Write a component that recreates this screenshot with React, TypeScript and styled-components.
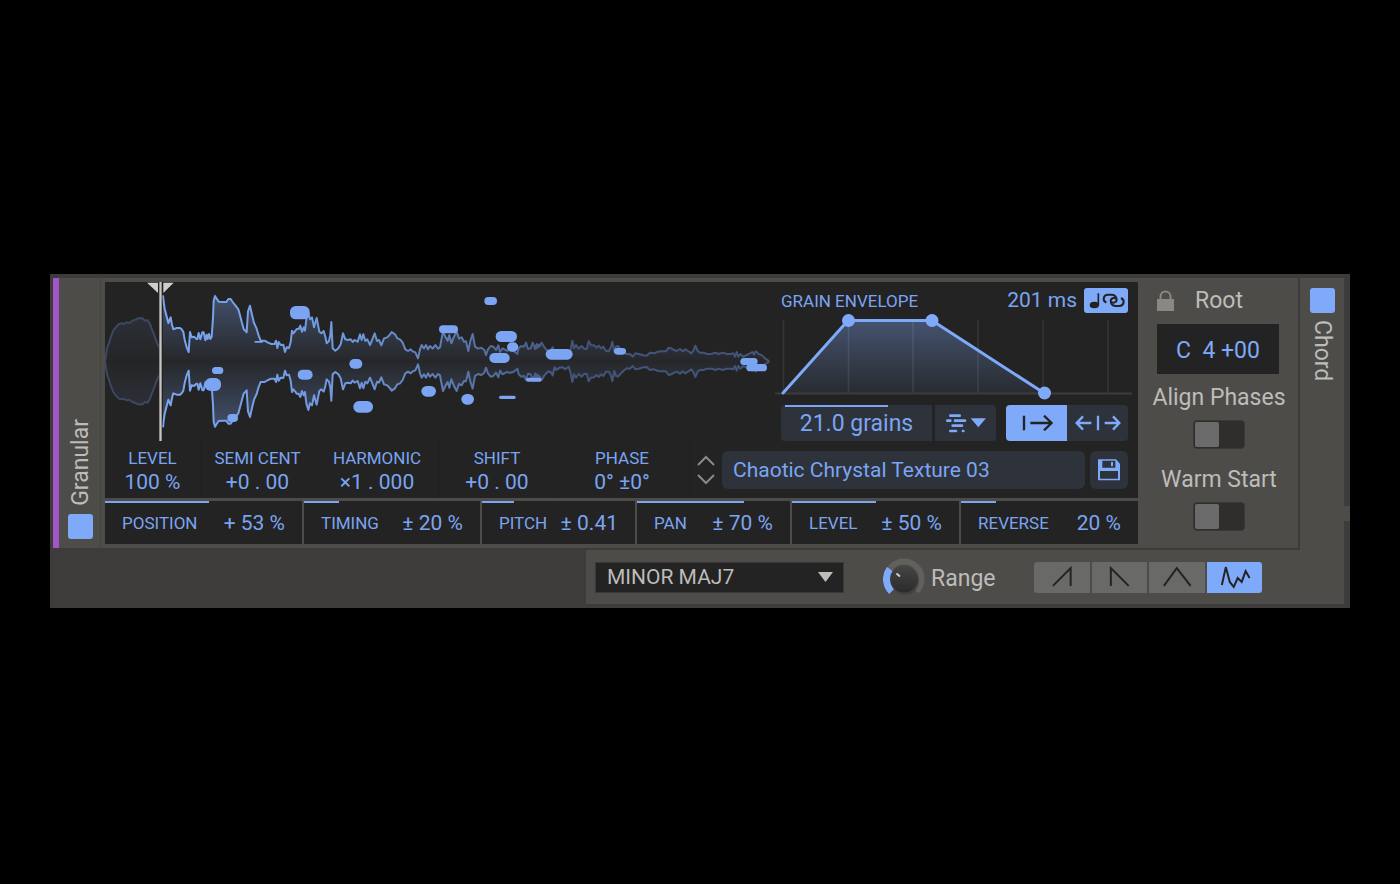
import React from 'react';
import styled, { createGlobalStyle, css } from 'styled-components';

const blue = '#7fa9f9';
const blueText = '#7ba5f2';
const ink = '#232323';
const slate = '#2d323b';
const face = '#4e4c49';
const shade = '#3d3c3a';
const pale = '#bdbcb9';

const GlobalStyle = createGlobalStyle`
  * { box-sizing: border-box; }
  body { margin: 0; background: #000; font-family: Roboto, "Liberation Sans", sans-serif; font-weight: 450; }
  button, input, select { font: inherit; color: inherit; margin: 0; padding: 0; border: 0; border-radius: 0; background: none; outline: none; }
  svg { display: block; flex: none; }
`;

const Page = styled.main`
  min-height: 100vh;
  display: flex;
  align-items: center;
  padding: 0 50px 2px;
`;

const Device = styled.section`
  flex: 1;
  display: flex;
  position: relative;
  background: ${shade};
  border: solid ${shade};
  border-width: 4px 6px 4px 3px;
`;

const Modules = styled.div`
  flex: 1;
  min-width: 0;
`;

const Oscillator = styled.div`
  display: flex;
  background: ${face};
  border: solid ${shade};
  border-width: 0 2px 2px 0;
`;

const Accent = styled.div`
  width: 6px;
  background: #a155c8;
`;

const Rail = styled.div`
  width: 42px;
  display: flex;
  flex-direction: column;
  align-items: center;
  justify-content: flex-end;
  gap: 8px;
  padding: 0 0 9px 2px;
  border-right: 1px solid #464441;
  color: ${pale};
  font-size: 23px;
  line-height: 26px;
`;

const RailName = styled.span<{ $up?: boolean }>`
  writing-mode: vertical-rl;
  ${p => p.$up && css`transform: rotate(180deg);`}
`;

const Power = styled.button`
  width: 25px;
  height: 25px;
  border-radius: 3px;
  background: ${blue};
`;

const ChordRail = styled.div`
  width: 44px;
  display: flex;
  flex-direction: column;
  align-items: center;
  gap: 7px;
  padding-top: 10px;
  background: ${face};
  color: ${pale};
  font-size: 23px;
  line-height: 26px;
`;

const EdgeNotch = styled.div`
  position: absolute;
  right: -6px;
  top: 228px;
  width: 6px;
  height: 15px;
  background: ${face};
`;

const Display = styled.div`
  flex: 1;
  min-width: 0;
  margin: 4px 0 4px 4px;
  color: ${blueText};
`;

const Screen = styled.div`
  background: ${ink};
  height: 216px;
`;

const ScreenTop = styled.div`
  display: flex;
  height: 159px;
`;

const Wave = styled.div`
  flex: 1;
  min-width: 0;
  svg { width: 100%; height: auto; }
`;

const Envelope = styled.div`
  width: 363px;
  display: flex;
  flex-direction: column;
  padding-top: 6px;
`;

const EnvelopeHead = styled.div`
  display: flex;
  align-items: center;
  height: 25px;
  padding: 0 10px 0 6px;
`;

const Caption = styled.span`
  font-size: 17px;
  line-height: 20px;
  white-space: nowrap;
`;

const Duration = styled.span`
  margin: 0 7px 2px auto;
  font-size: 21px;
  line-height: 24px;
`;

const SyncButton = styled.button`
  width: 44px;
  height: 25px;
  border-radius: 3px;
  background: ${blue};
`;

const EnvelopeControls = styled.div`
  display: flex;
  height: 36px;
  padding: 0 10px 0 6px;
  margin-top: 4px;
`;

const GrainsField = styled.label`
  position: relative;
  width: 151px;
  margin-right: 3px;
  border-radius: 4px 0 0 4px;
  background: ${slate};
  overflow: hidden;
  input { width: 100%; height: 36px; text-align: center; font-size: 23px; }
`;

const GrainsLevel = styled.i`
  position: absolute;
  left: 4px;
  top: 0;
  height: 2px;
  width: 103px;
  background: ${blueText};
`;

const IconButton = styled.button<{ $on?: boolean; $radius: string }>`
  width: 61px;
  display: flex;
  align-items: center;
  justify-content: center;
  border-radius: ${p => p.$radius};
  background: ${p => (p.$on ? blue : slate)};
  color: ${p => (p.$on ? ink : blue)};
`;

const SaveButton = styled(IconButton)`
  width: 38px;
  height: 38px;
`;

const Directions = styled.div`
  display: flex;
  margin-left: auto;
`;

const ScreenBottom = styled.div`
  display: flex;
  height: 57px;
`;

const Param = styled.label<{ $width: number }>`
  width: ${p => p.$width}px;
  padding-top: 7px;
  text-align: center;
  border-right: 1px solid #202020;
  input { display: block; width: 100%; height: 28px; text-align: center; font-size: 21px; line-height: 28px; }
  span { display: block; }
`;

const Preset = styled.div`
  flex: 1;
  display: flex;
  align-items: center;
  gap: 5px;
  height: 38px;
  margin: 10px 10px 0 7px;
`;

const Stepper = styled.button`
  width: 20px;
  height: 32px;
`;

const PresetName = styled.button`
  flex: 1;
  height: 38px;
  padding: 0 11px;
  border-radius: 6px;
  background: ${slate};
  color: ${blueText};
  text-align: left;
  font-size: 21px;
  line-height: 26px;
`;

const Modulators = styled.div`
  display: grid;
  grid-template-columns: 197fr 176fr 153fr 153fr 167fr 177fr;
  gap: 2px;
  margin-top: 3px;
`;

const Modulator = styled.label`
  min-width: 0;
  position: relative;
  display: flex;
  align-items: center;
  justify-content: space-between;
  height: 43px;
  padding: 0 17px;
  background: ${ink};
  input { width: 60px; flex: 1; text-align: right; font-size: 21px; line-height: 26px; }
`;

const Amount = styled.i`
  position: absolute;
  left: 0;
  top: 0;
  height: 2px;
  background: ${blueText};
`;

const Side = styled.aside`
  width: 160px;
  display: flex;
  flex-direction: column;
  align-items: center;
  color: ${pale};
  font-size: 23px;
  line-height: 28px;
`;

const RootHead = styled.div`
  display: flex;
  align-items: center;
  gap: 21px;
  align-self: stretch;
  margin: 9px 0 9px 19px;
`;

const RootNote = styled.input`
  width: 122px;
  height: 50px;
  padding-top: 3px;
  background: ${ink};
  color: ${blue};
  text-align: center;
  white-space: pre;
  margin-bottom: 10px;
`;

const SwitchField = styled.label`
  display: flex;
  flex-direction: column;
  align-items: center;
  gap: 8px;
  margin: 0 0 17px 2px;
  white-space: nowrap;
`;

const Switch = styled.input`
  appearance: none;
  width: 52px;
  height: 29px;
  padding: 2px;
  border-radius: 4px;
  background: #2f2e2c;
  border: 1px solid #393836;
  &::before {
    content: '';
    display: block;
    width: 24px;
    height: 25px;
    margin: -1px;
    border-radius: 2px;
    background: #6b6b6b;
  }
  &:checked::before { margin-left: 22px; background: ${blue}; }
`;

const ChordBar = styled.div`
  display: flex;
  align-items: center;
  height: 54px;
  width: 714px;
  margin-left: auto;
  padding-left: 9px;
  background: ${face};
  color: ${pale};
`;

const SelectBox = styled.div`
  display: flex;
  align-items: center;
  width: 249px;
  height: 31px;
  background: ${ink};
  border: 1px solid #3a3937;
  select { flex: 1; height: 29px; padding: 0 11px; appearance: none; font-size: 21px; }
  svg { margin: 0 10px 0 -25px; pointer-events: none; }
`;

const Knob = styled.label`
  position: relative;
  display: flex;
  align-items: center;
  gap: 6px;
  margin: 4px 0 0 39px;
  font-size: 23px;
  line-height: 28px;
  input { position: absolute; left: 0; top: 0; width: 42px; height: 42px; opacity: 0; }
`;

const Shapes = styled.div`
  display: flex;
  gap: 2px;
  width: 228px;
  margin-left: auto;
  margin-right: 38px;
  border-radius: 3px;
  overflow: hidden;
`;

const ShapeButton = styled.button<{ $on?: boolean }>`
  flex: 1;
  min-width: 0;
  height: 31px;
  background: ${p => (p.$on ? blue : '#696968')};
  color: ${ink};
  svg { width: 100%; }
`;

/* Sample contour: x position and distance from the centre line. */
const intro: number[][] = [
  [0, 0], [3, 18], [7, 42], [12, 55], [17, 72], [25, 92], [32, 102], [42, 112], [53, 114], [58, 112], [64, 117],
  [73, 115], [82, 122], [91, 125], [102, 130], [108, 128], [112, 130], [119, 122], [128, 124], [135, 112],
  [141, 95], [147, 80], [154, 60], [162, 42],
];

const head = [
  357, 82, 359, 102, 362, 122, 367, 142, 373, 165, 380, 148, 384, 170, 388, 184, 398, 180, 408, 180, 413, 184,
  418, 192, 422, 215, 428, 238, 434, 252, 438, 192, 443, 208, 450, 206, 456, 212, 460, 213, 464, 195, 469, 214,
  475, 193, 479, 193, 484, 217, 488, 200, 491, 213, 495, 198, 499, 213, 503, 207, 507, 150, 509, 98, 513, 84,
  518, 92, 524, 101, 535, 102, 547, 102, 553, 93, 560, 93, 566, 102, 574, 112, 583, 124, 588, 142, 594, 165,
  599, 183, 608, 193, 612, 130, 618, 113, 624, 140, 630, 165, 638, 182, 643, 200, 650, 218, 662, 218, 672, 224,
  682, 228, 692, 228, 696, 218, 700, 240, 704, 222, 710, 231, 718, 230, 723, 252, 728, 238, 735, 240, 740, 222,
];
const body = [
  36, 152, 40, 160, 46, 153, 50, 147, 56, 147, 61, 137, 66, 155, 71, 142, 75, 152, 79, 118, 85, 98, 90, 118,
  96, 112, 102, 142, 110, 114, 118, 155, 124, 160, 131, 153, 136, 170, 140, 190, 147, 183, 151, 165, 154, 126,
  158, 205, 166, 212, 175, 205, 182, 193, 189, 160, 196, 178, 204, 180, 212, 178, 218, 186, 224, 180, 233, 185,
  240, 163, 245, 180, 250, 163, 256, 183, 262, 178, 270, 195, 277, 178, 284, 160, 291, 183, 297, 180, 304, 196,
  312, 175, 322, 172, 330, 163, 335, 156, 345, 163, 352, 175, 360, 178, 368, 188, 376, 208, 384, 213, 392, 208,
  398, 214, 406, 217, 414, 235, 420, 208, 425, 195, 432, 205, 438, 195, 444, 208, 450, 198, 458, 206, 466, 195,
  474, 206, 480, 202, 484, 180, 489, 155, 496, 170, 503, 182, 508, 165, 514, 190, 522, 170, 530, 155, 537, 176,
  545, 172, 552, 185, 558, 184, 565, 213, 571, 183, 578, 162, 585, 200, 594, 206, 604, 203, 613, 210, 618, 225,
  624, 208, 632, 198, 640, 200, 648, 210, 655, 196, 660, 216, 668, 205, 680, 212, 690, 210, 700, 212, 712, 222,
  716, 205, 724, 198, 732, 200, 738, 188, 744, 207, 752, 205, 758, 188, 764, 202, 771, 192, 780, 198,
];
const tail = [
  8, 188, 15, 207, 22, 195, 30, 195, 35, 188, 42, 200, 48, 208, 56, 214, 62, 212, 68, 202, 74, 226, 80, 218,
  88, 225, 98, 226, 106, 220, 116, 228, 122, 208, 127, 182, 132, 205, 138, 195, 146, 206, 155, 198, 162, 206,
  170, 207, 176, 184, 183, 195, 192, 196, 200, 203, 206, 197, 214, 205, 220, 200, 228, 213, 237, 213, 243, 200,
  247, 185, 253, 215, 258, 200, 264, 198, 270, 205, 280, 215, 290, 223, 300, 222, 308, 230, 316, 220, 326, 222,
  340, 226, 350, 227, 360, 218, 372, 220, 384, 215, 396, 214, 408, 214, 416, 203, 424, 205, 432, 210, 440, 213,
  450, 207, 458, 214, 466, 208, 474, 213, 484, 220, 490, 212, 496, 197, 503, 213, 510, 218, 520, 218, 532, 222,
  545, 222, 556, 218, 566, 222, 578, 218, 590, 222, 602, 222, 610, 220, 615, 230, 620, 216, 625, 230, 631, 222,
  640, 230, 650, 225, 660, 220, 668, 216, 672, 224, 677, 214, 686, 222, 696, 226, 706, 236, 718, 244,
];

const pairs = (list: number[], dx: number, axis: number): number[][] => {
  const out: number[][] = [];
  for (let i = 0; i < list.length; i += 2) out.push([list[i] + dx, axis - list[i + 1]]);
  return out;
};
const sample = [...pairs(head, -183, 280), ...pairs(body, 525, 244), ...pairs(tail, 1275, 244)]
  .filter((p, i, all) => i === 0 || p[0] > all[i - 1][0]);

const AXIS = 238;
const line = (pts: number[][], sign: number) => pts.map(([x, a]) => `${x},${AXIS - sign * a}`);
const outline = (pts: number[][], sign: number) => 'M' + line(pts, sign).join('L');
const area = (pts: number[][]) => 'M' + [...line(pts, 1), ...line(pts, -1).reverse()].join('L') + 'Z';

/* Active grains: left, top, right, bottom. */
const grains: number[][] = [
  [321, 255, 355, 276], [300, 288, 348, 327], [367, 396, 399, 420], [448, 177, 474, 182],
  [555, 72, 614, 112], [578, 263, 623, 293], [733, 231, 772, 260], [745, 357, 804, 392],
  [1002, 130, 1059, 154], [949, 312, 993, 344], [1069, 336, 1107, 368], [1138, 45, 1176, 69],
  [1172, 147, 1236, 180], [1206, 181, 1240, 209], [1153, 213, 1214, 243], [1182, 341, 1232, 351],
  [1263, 287, 1310, 299], [1322, 201, 1403, 233], [1527, 198, 1563, 218], [1906, 228, 1958, 249],
  [1924, 246, 1986, 268],
];

const Waveform = () => (
  <svg viewBox="0 0 2010 477" role="img" aria-label="Sample waveform">
    <defs>
      <linearGradient id="stroke" gradientUnits="userSpaceOnUse" x1="170" y1="0" x2="1400" y2="0">
        <stop offset="0" stopColor="#7ba5f2" />
        <stop offset="0.45" stopColor="#7098de" />
        <stop offset="0.7" stopColor="#5c7ab0" />
        <stop offset="1" stopColor="#42547a" />
      </linearGradient>
      <linearGradient id="fill" gradientUnits="userSpaceOnUse" x1="0" y1="38" x2="0" y2="438">
        <stop offset="0" stopColor="#7fa9f9" stopOpacity="0.34" />
        <stop offset="0.5" stopColor="#7fa9f9" stopOpacity="0.03" />
        <stop offset="1" stopColor="#7fa9f9" stopOpacity="0.34" />
      </linearGradient>
    </defs>
    <path d={area(intro)} fill="url(#fill)" opacity="0.4" />
    <path d={area(sample)} fill="url(#fill)" />
    <g fill="none" strokeWidth="6" strokeLinejoin="round">
      <path d={outline(intro, 1)} stroke="#3b485f" />
      <path d={outline(intro, -1)} stroke="#3b485f" />
      <path d={outline(sample, 1)} stroke="url(#stroke)" />
      <path d={outline(sample, -1)} stroke="url(#stroke)" />
    </g>
    {grains.map(([l, t, r, b]) => (
      <rect key={l} x={l} y={t} width={r - l} height={b - t} rx={Math.min((b - t) / 2, 17)} fill={blueText} />
    ))}
    <rect x="162" y="0" width="10" height="477" fill={ink} />
    <rect x="163" y="0" width="7" height="477" fill="#c6c5c2" />
    <path d="M126 2H159V33ZM175 2H206L175 33Z" fill="#cfcfcd" />
  </svg>
);

const EnvelopeGraph = () => (
  <svg width="357" height="88" viewBox="0 0 357 88" role="img" aria-label="Grain envelope shape">
    <defs>
      <linearGradient id="env" x1="0" y1="0" x2="0" y2="1">
        <stop offset="0" stopColor="#7fa9f9" stopOpacity="0.36" />
        <stop offset="1" stopColor="#7fa9f9" stopOpacity="0.06" />
      </linearGradient>
    </defs>
    <path d="M8 80L73 7H157L269 80Z" fill="url(#env)" />
    <path d="M8.5 7V80M73.500 7V80M138 7V80M203 7V80M268 7V80M333 7V80" stroke="#fff" strokeOpacity="0.09" strokeWidth="1.500" />
    <path d="M0 80.500H357" stroke="#3c3c3d" strokeWidth="2" />
    <path d="M8 80L73 7.500H157L269 80" fill="none" stroke={blue} strokeWidth="3" strokeLinecap="round" />
    <g fill={blue}>
      <circle cx="73.500" cy="7.500" r="6.500" />
      <circle cx="157" cy="7.500" r="6.500" />
      <circle cx="269.500" cy="80" r="6.500" />
    </g>
  </svg>
);

const SyncIcon = () => (
  <svg width="44" height="25" viewBox="0 0 132 75" fill="none" stroke={ink} strokeWidth="6">
    <ellipse cx="31" cy="51" rx="14" ry="10" fill={ink} stroke="none" />
    <path d="M43 16V52" strokeWidth="5" />
    <path d="M67 44C54 38 58 20 72 20H82C99 20 103 40 90 44Q84 45 81 41" />
    <path d="M111 30C124 36 120 54 106 54H96C79 54 75 34 88 30Q94 29 97 33" />
  </svg>
);

const SpreadIcon = () => (
  <svg width="40" height="20" viewBox="0 0 120 60">
    <path d="M13 8H41M4 23H13M27 23H57M20 38H48M13 54H30M51 54H52" stroke={blue} strokeWidth="8" strokeLinecap="round" />
    <path d="M74 16H120L97 43Z" fill={blue} />
  </svg>
);

const ForwardIcon = () => (
  <svg width="32" height="16" viewBox="0 0 96 48" fill="none" stroke="currentColor" strokeWidth="7">
    <path d="M9 2V46M28 24H92M69 2L92 24L69 46" />
  </svg>
);

const BothWaysIcon = () => (
  <svg width="46" height="16" viewBox="0 0 138 48" fill="none" stroke="currentColor" strokeWidth="7">
    <path d="M69 2V46M24 4L5 24L24 44M5 24H49M114 4L133 24L114 44M133 24H89" />
  </svg>
);

const SaveIcon = () => (
  <svg width="24" height="24" viewBox="0 0 72 72">
    <path d="M3 4H57L69 17V67H3Z" fill={blue} />
    <path d="M16 8H55V29H16ZM9 39H63V62H9Z" fill={slate} />
    <path d="M42 12H48V25H42Z" fill={blue} />
  </svg>
);

const LockIcon = () => (
  <svg width="17" height="22" viewBox="0 0 17 22">
    <path d="M3.500 10V6.500a5 5 0 0 1 10 0V10" fill="none" stroke="#8b8884" strokeWidth="2" />
    <path d="M0 9H17V21H0Z" fill="#8b8884" />
  </svg>
);

const KnobFace = () => (
  <svg width="42" height="42" viewBox="0 0 42 42">
    <defs>
      <linearGradient id="cap" x1="0" y1="0" x2="0" y2="1">
        <stop offset="0" stopColor="#454545" />
        <stop offset="1" stopColor="#2b2b2b" />
      </linearGradient>
    </defs>
    <path d="M8.600 33.400A17.500 17.500 0 1 1 33.400 33.400" fill="none" stroke="#62605d" strokeWidth="6" />
    <path d="M8.600 33.400A17.500 17.500 0 0 1 6.700 10.900" fill="none" stroke={blue} strokeWidth="7" />
    <circle cx="22" cy="23" r="14" fill="#3f3d3b" opacity="0.7" />
    <circle cx="21" cy="21" r="13.500" fill="url(#cap)" />
    <path d="M13.500 15.500L17 18.500" stroke="#d0d0d0" strokeWidth="2" />
  </svg>
);

const params = [
  { name: 'LEVEL', value: '100 %', width: 96 },
  { name: 'SEMI CENT', value: '+0 . 00', width: 114 },
  { name: 'HARMONIC', value: '×1 . 000', width: 125 },
  { name: 'SHIFT', value: '+0 . 00', width: 115 },
  { name: 'PHASE', value: '0° ±0°', width: 135 },
];

const modulators = [
  { name: 'POSITION', value: '+ 53 %', amount: 53 },
  { name: 'TIMING', value: '± 20 %', amount: 20 },
  { name: 'PITCH', value: '± 0.41', amount: 21 },
  { name: 'PAN', value: '± 70 %', amount: 70 },
  { name: 'LEVEL', value: '± 50 %', amount: 50 },
  { name: 'REVERSE', value: '20 %', amount: 20 },
];

const shapes = [
  { name: 'Ramp up', d: 'M19 24L37 6V24' },
  { name: 'Ramp down', d: 'M19 24V6L37 24' },
  { name: 'Triangle', d: 'M15 24L28 6L42 24' },
  { name: 'Random', d: 'M15 23L19 5L23 20L27 25L31 16L35 20L39 9L43 16' },
];

export default function App() {
  return (
    <>
      <GlobalStyle />
      <Page>
        <Device>
          <Modules>
            <Oscillator>
              <Accent />
              <Rail>
                <RailName $up>Granular</RailName>
                <Power aria-label="Granular on" />
              </Rail>
              <Display>
                <Screen>
                  <ScreenTop>
                    <Wave><Waveform /></Wave>
                    <Envelope>
                      <EnvelopeHead>
                        <Caption>GRAIN ENVELOPE</Caption>
                        <Duration>201 ms</Duration>
                        <SyncButton aria-label="Sync and link"><SyncIcon /></SyncButton>
                      </EnvelopeHead>
                      <EnvelopeGraph />
                      <EnvelopeControls>
                        <GrainsField>
                          <GrainsLevel />
                          <input aria-label="Grain density" defaultValue="21.0 grains" />
                        </GrainsField>
                        <IconButton $radius="0 4px 4px 0" aria-label="Grain spread"><SpreadIcon /></IconButton>
                        <Directions>
                          <IconButton $on $radius="4px 0 0 4px" aria-label="Forward"><ForwardIcon /></IconButton>
                          <IconButton $radius="0 4px 4px 0" aria-label="Both directions"><BothWaysIcon /></IconButton>
                        </Directions>
                      </EnvelopeControls>
                    </Envelope>
                  </ScreenTop>
                  <ScreenBottom>
                    {params.map(p => (
                      <Param key={p.name} $width={p.width}>
                        <Caption>{p.name}</Caption>
                        <input defaultValue={p.value} />
                      </Param>
                    ))}
                    <Preset>
                      <Stepper aria-label="Previous or next sample">
                        <svg width="20" height="32" viewBox="0 0 20 32" fill="none" stroke="#8a8a89" strokeWidth="2">
                          <path d="M1 11L9 3L17 11M1 21L9 29L17 21" />
                        </svg>
                      </Stepper>
                      <PresetName>Chaotic Chrystal Texture 03</PresetName>
                      <SaveButton $radius="6px" aria-label="Save sample"><SaveIcon /></SaveButton>
                    </Preset>
                  </ScreenBottom>
                </Screen>
                <Modulators>
                  {modulators.map(m => (
                    <Modulator key={m.name}>
                      <Amount style={{ width: `${m.amount}%` }} />
                      <Caption>{m.name}</Caption>
                      <input defaultValue={m.value} />
                    </Modulator>
                  ))}
                </Modulators>
              </Display>
              <Side>
                <RootHead>
                  <LockIcon />
                  <label htmlFor="root">Root</label>
                </RootHead>
                <RootNote id="root" defaultValue={'C\u00a0 4 +00'} />
                <SwitchField>Align Phases<Switch type="checkbox" /></SwitchField>
                <SwitchField>Warm Start<Switch type="checkbox" /></SwitchField>
              </Side>
            </Oscillator>
            <ChordBar>
              <SelectBox>
                <select aria-label="Chord type"><option>MINOR MAJ7</option></select>
                <svg width="15" height="10" viewBox="0 0 15 10"><path d="M0 0H15L7.500 10Z" fill={pale} /></svg>
              </SelectBox>
              <Knob>
                <KnobFace />
                <input type="range" defaultValue="30" />
                Range
              </Knob>
              <Shapes>
                {shapes.map((s, i) => (
                  <ShapeButton key={s.name} $on={i === 3} aria-label={s.name}>
                    <svg width="56" height="31" viewBox="0 0 56 31" fill="none" stroke="currentColor" strokeWidth="2">
                      <path d={s.d} />
                    </svg>
                  </ShapeButton>
                ))}
              </Shapes>
            </ChordBar>
          </Modules>
          <ChordRail>
            <Power aria-label="Chord on" />
            <RailName>Chord</RailName>
          </ChordRail>
          <EdgeNotch />
        </Device>
      </Page>
    </>
  );
}
